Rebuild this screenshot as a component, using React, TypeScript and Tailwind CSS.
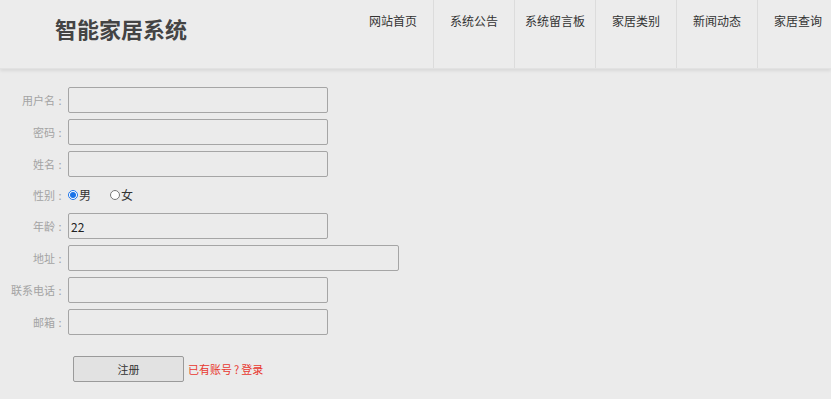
import React from 'react'

const navItems = ['网站首页', '系统公告', '系统留言板', '家居类别', '新闻动态', '家居查询']

const fields: { label: string, value?: string, wide?: boolean }[] = [
    { label: '用户名' },
    { label: '密码' },
    { label: '姓名' },
]

const fields2: { label: string, value?: string, wide?: boolean }[] = [
    { label: '年龄', value: '22' },
    { label: '地址', wide: true },
    { label: '联系电话' },
    { label: '邮箱' },
]

const Label = ({ text }: { text: string }) => (
    <span className="w-[68px] pr-[3px] flex justify-end items-center text-[11px] text-[#a3a3a3] whitespace-nowrap">
        {text}
        <span className="w-[10px] text-center">:</span>
    </span>
)

const Row = ({ label, value, wide }: { label: string, value?: string, wide?: boolean }) => (
    <div className="flex items-center h-[26px]">
        <Label text={label} />
        <input
            defaultValue={value}
            className={`${wide ? 'w-[331px]' : 'w-[260px]'} h-[26px] border border-[#a5a5a5] rounded-[2px] bg-transparent px-[2px] text-[12px] text-[#222] outline-none`}
        />
    </div>
)

export default function App() {
    return (
        <div className="min-h-[399px] bg-[#ebebeb] font-['Noto_Sans_CJK_SC','Liberation_Sans',sans-serif] overflow-hidden">
            <header className="flex h-[69px] bg-[#ececec] shadow-[0_2px_3px_rgba(0,0,0,0.08)] border-b border-[#e2e2e2] overflow-hidden">
                <div className="w-[353px] shrink-0 pl-[55px] pt-[12px]">
                    <h1 className="text-[22px] leading-[32px] font-bold text-[#444]">智能家居系统</h1>
                </div>
                <nav className="flex shrink-0">
                    {navItems.map((item) => (
                        <a key={item} className="w-[81px] shrink-0 border-r border-[#dcdcdc] pt-[12px] text-center text-[12px] text-[#333]">
                            {item}
                        </a>
                    ))}
                </nav>
            </header>

            <form className="pt-[18px] flex flex-col gap-[6px]">
                {fields.map((f) => <Row key={f.label} {...f} />)}
                <div className="flex items-center h-[24px] text-[12px]">
                    <Label text="性别" />
                    <label className="flex items-center text-[#333]">
                        <input type="radio" name="sex" defaultChecked className="m-0 w-[10px] h-[10px] accent-[#1a73e8]" />
                        <span className="ml-[1px]">男</span>
                    </label>
                    <label className="flex items-center ml-[19px] text-[#333]">
                        <input type="radio" name="sex" className="m-0 w-[10px] h-[10px]" />
                        <span className="ml-[1px]">女</span>
                    </label>
                </div>
                {fields2.map((f) => <Row key={f.label} {...f} />)}
                <div className="flex items-center mt-[15px] pl-[73px]">
                    <button type="button" className="w-[111px] h-[26px] bg-[#e2e2e2] border border-[#9a9a9a] rounded-[2px] text-[11px] text-[#333]">注册</button>
                    <a className="ml-[4px] text-[11px] text-[#e8382f]">已有账号<span className="px-[2px]">?</span>登录</a>
                </div>
            </form>
        </div>
    )
}
